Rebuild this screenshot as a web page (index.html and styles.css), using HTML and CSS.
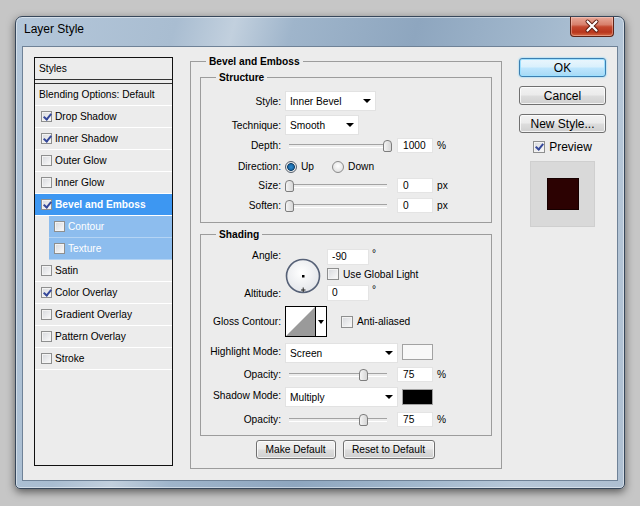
FILE: index.html
```html
<!DOCTYPE html>
<html lang="en">
<head>
  <meta charset="UTF-8">
  <title>Layer Style</title>
  <link rel="stylesheet" href="styles.css">
</head>
<body>
  <div class="window">
    <div class="titlebar">
      <span class="title">Layer Style</span>
      <div class="close">
        <svg width="44" height="20" viewBox="0 0 44 20">
          <path d="M17.5 5.5 L26.5 14.5 M26.5 5.5 L17.5 14.5" stroke="#5b1b10" stroke-width="4" stroke-linecap="round"/>
          <path d="M17.5 5.5 L26.5 14.5 M26.5 5.5 L17.5 14.5" stroke="#fff" stroke-width="2.2" stroke-linecap="round"/>
        </svg>
      </div>
    </div>

    <div class="client">
      <!-- styles list -->
      <div class="styles-list">
        <div class="list-head">Styles</div>
        <div class="list-blend">Blending Options: Default</div>
        <div class="item"><span class="cb on"></span>Drop Shadow</div>
        <div class="item"><span class="cb on"></span>Inner Shadow</div>
        <div class="item"><span class="cb"></span>Outer Glow</div>
        <div class="item"><span class="cb"></span>Inner Glow</div>
        <div class="item active"><span class="cb on"></span>Bevel and Emboss</div>
        <div class="item sub"><span class="cb"></span>Contour</div>
        <div class="item sub"><span class="cb"></span>Texture</div>
        <div class="item"><span class="cb"></span>Satin</div>
        <div class="item"><span class="cb on"></span>Color Overlay</div>
        <div class="item"><span class="cb"></span>Gradient Overlay</div>
        <div class="item"><span class="cb"></span>Pattern Overlay</div>
        <div class="item"><span class="cb"></span>Stroke</div>
      </div>

      <!-- settings -->
      <fieldset class="group outer">
        <legend>Bevel and Emboss</legend>

        <fieldset class="group structure">
          <legend>Structure</legend>
          <div class="row r-style">
            <span class="lbl">Style:</span>
            <div class="select w-style"><span>Inner Bevel</span><i class="arrow"></i></div>
          </div>
          <div class="row r-tech">
            <span class="lbl">Technique:</span>
            <div class="select w-tech"><span>Smooth</span><i class="arrow"></i></div>
          </div>
          <div class="row r-depth">
            <span class="lbl">Depth:</span>
            <div class="slider"><span class="thumb" style="left: 98px"></span></div>
            <div class="num">1000</div>
            <span class="unit">%</span>
          </div>
          <div class="row r-dir">
            <span class="lbl">Direction:</span>
            <span class="radio on"></span><span class="opt">Up</span>
            <span class="radio down"></span><span class="opt">Down</span>
          </div>
          <div class="row r-size">
            <span class="lbl">Size:</span>
            <div class="slider"><span class="thumb" style="left: 0px"></span></div>
            <div class="num">0</div>
            <span class="unit">px</span>
          </div>
          <div class="row r-soften">
            <span class="lbl">Soften:</span>
            <div class="slider"><span class="thumb" style="left: 0px"></span></div>
            <div class="num">0</div>
            <span class="unit">px</span>
          </div>
        </fieldset>

        <fieldset class="group shading">
          <legend>Shading</legend>
          <div class="angle-block">
            <div class="angle-labels">
              <span class="lbl">Angle:</span>
              <span class="lbl alt">Altitude:</span>
            </div>
            <svg class="dial" width="36" height="36" viewBox="0 0 36 36">
              <defs>
                <radialGradient id="dialFill" cx="45%" cy="40%" r="60%">
                  <stop offset="0" stop-color="#ffffff"/>
                  <stop offset="1" stop-color="#e4e6ea"/>
                </radialGradient>
              </defs>
              <circle cx="18" cy="18" r="16.5" fill="url(#dialFill)" stroke="#566177" stroke-width="1.6"/>
              <rect x="17" y="17" width="2.5" height="2.5" fill="#000"/>
              <path d="M18.2 29.5 V34 M16 32 H20.5" stroke="#222" stroke-width="1"/>
            </svg>
            <div class="angle-fields">
              <div class="frow">
                <div class="num w-angle">-90</div><span class="deg">°</span>
              </div>
              <div class="frow check-row">
                <span class="cb"></span><span>Use Global Light</span>
              </div>
              <div class="frow alt-row">
                <div class="num w-angle">0</div><span class="deg">°</span>
              </div>
            </div>
          </div>

          <div class="row r-gloss">
            <span class="lbl">Gloss Contour:</span>
            <div class="contour">
              <svg width="29" height="29" viewBox="0 0 29 29">
                <rect width="29" height="29" fill="#fff"/>
                <polygon points="0,29 29,0 29,29" fill="#9a9a9a"/>
              </svg>
              <div class="contour-drop"><i class="arrow"></i></div>
            </div>
            <span class="cb anti"></span><span>Anti-aliased</span>
          </div>

          <div class="row r-hmode">
            <span class="lbl">Highlight Mode:</span>
            <div class="select w-mode"><span>Screen</span><i class="arrow"></i></div>
            <div class="swatch light"></div>
          </div>
          <div class="row r-op1">
            <span class="lbl">Opacity:</span>
            <div class="slider"><span class="thumb" style="left: 74px"></span></div>
            <div class="num">75</div>
            <span class="unit">%</span>
          </div>
          <div class="row r-smode">
            <span class="lbl">Shadow Mode:</span>
            <div class="select w-mode"><span>Multiply</span><i class="arrow"></i></div>
            <div class="swatch dark"></div>
          </div>
          <div class="row r-op2">
            <span class="lbl">Opacity:</span>
            <div class="slider"><span class="thumb" style="left: 74px"></span></div>
            <div class="num">75</div>
            <span class="unit">%</span>
          </div>
        </fieldset>

        <div class="defaults">
          <div class="btn small w-make">Make Default</div>
          <div class="btn small w-reset">Reset to Default</div>
        </div>
      </fieldset>

      <!-- dialog buttons -->
      <div class="side">
        <div class="btn big default">OK</div>
        <div class="btn big">Cancel</div>
        <div class="btn big">New Style...</div>
        <div class="preview-row"><span class="cb on"></span><span>Preview</span></div>
        <div class="preview-box"><div class="preview-swatch"></div></div>
      </div>
    </div>
  </div>
</body>
</html>
```

FILE: styles.css
```css
* {
  margin: 0;
  padding: 0;
  box-sizing: border-box;
}

body {
  width: 640px;
  height: 506px;
  overflow: hidden;
  background: #c6c6c6;
  padding: 16px 15px 0;
  font-family: "Liberation Sans", Arial, sans-serif;
  font-size: 10.2px;
  color: #000;
}

/* window frame */
.window {
  width: 610px;
  height: 473px;
  border: 1px solid #37475a;
  border-radius: 7px 7px 5px 5px;
  background: linear-gradient(105deg, #b4c7da 0%, #a9bdd1 22%, #c2d0de 30%, #9fb5cb 38%, #8ea6bf 55%, #a2b8cd 72%, #b6c7d8 85%, #aebfd1 100%);
  box-shadow: 0 3px 9px rgba(0, 0, 0, 0.55), inset 0 0 0 1px rgba(255, 255, 255, 0.45);
  padding: 0 6px 7px;
  display: flex;
  flex-direction: column;
}

.titlebar {
  height: 29px;
  display: flex;
  justify-content: space-between;
  align-items: flex-start;
}

.title {
  font-size: 12px;
  line-height: 14px;
  padding: 5px 0 0 2px;
}

.close {
  width: 44px;
  height: 20px;
  margin-right: 4px;
  border: 1px solid #5e2418;
  border-top: none;
  border-radius: 0 0 4px 4px;
  background: linear-gradient(#e8a999 0%, #d8806c 40%, #c4482f 52%, #b8361d 80%, #d46a45 100%);
  box-shadow: inset 0 0 0 1px rgba(255, 220, 210, 0.4);
}

.close svg {
  display: block;
  margin: -1px 0 0 -1px;
}

.client {
  flex: 1;
  display: flex;
  align-items: flex-start;
  background: #ececec;
  border: 1px solid #6f8297;
  padding: 8px 0 0 11px;
}

/* left list */
.styles-list {
  width: 139px;
  height: 409px;
  margin-top: 2px;
  border: 1px solid #111;
}

.list-head {
  height: 22px;
  line-height: 21px;
  padding-left: 4px;
  border-bottom: 1px solid #333;
}

.list-blend {
  margin-top: 3px;
  height: 23px;
  line-height: 21px;
  padding-left: 4px;
  border-top: 1px solid #333;
  border-bottom: 1px solid #fff;
}

.item {
  height: 22px;
  display: flex;
  align-items: center;
  padding-left: 6px;
  border-bottom: 1px solid #fff;
}

.item.active {
  background: #3d97f2;
  color: #fff;
  font-weight: bold;
}

.item.sub {
  margin-left: 14px;
  padding-left: 5px;
  background: #8dbdee;
  color: #fff;
  border-bottom-color: #b4d4f4;
}

/* checkbox */
.cb {
  position: relative;
  flex: none;
  width: 11px;
  height: 11px;
  margin-right: 3px;
  border: 1px solid #8e8f8f;
  background: linear-gradient(135deg, #d6d8dc, #fbfbfb);
  box-shadow: inset 0 0 0 1px #f3f3f3;
}

.cb.on::after {
  content: '';
  position: absolute;
  left: 3px;
  top: 0;
  width: 3px;
  height: 6px;
  border-right: 2px solid #35489a;
  border-bottom: 2px solid #35489a;
  transform: rotate(40deg);
}

/* fieldsets */
.group {
  border: 1px solid #9c9c9c;
  min-width: 0;
}

.group > legend {
  font-weight: bold;
  line-height: 13px;
  padding: 0 3px;
  margin-left: 15px;
}

.outer {
  width: 312px;
  height: 414px;
  margin-left: 17px;
}

.structure {
  width: 292px;
  height: 152px;
  margin: 3px 0 0 9px;
}

.shading {
  width: 292px;
  height: 208px;
  margin: 5px 0 0 9px;
}

.row {
  display: flex;
  align-items: center;
}

.lbl {
  flex: none;
  width: 80px;
  margin-right: 4px;
  text-align: right;
}

.r-style { height: 20px; margin-top: 7px; }
.r-tech { height: 20px; margin-top: 4px; }
.r-depth { height: 17px; margin-top: 2px; }
.r-dir { height: 17px; margin-top: 4px; }
.r-size { height: 17px; margin-top: 2px; }
.r-soften { height: 17px; margin-top: 3px; }

/* select boxes */
.select {
  height: 20px;
  display: flex;
  align-items: center;
  justify-content: space-between;
  padding: 0 4px;
  background: #fff;
  border: 1px solid #e2e2e2;
}

.w-style { width: 91px; }
.w-tech { width: 74px; }
.w-mode { width: 113px; }

.arrow {
  width: 0;
  height: 0;
  border-left: 4px solid transparent;
  border-right: 4px solid transparent;
  border-top: 4px solid #000;
}

/* sliders */
.slider {
  position: relative;
  width: 107px;
  height: 17px;
}

.slider::before {
  content: '';
  position: absolute;
  left: 4px;
  right: 5px;
  top: 7px;
  height: 2px;
  border-top: 1px solid #a3a3a3;
  border-bottom: 1px solid #fff;
}

.thumb {
  position: absolute;
  top: 3px;
  width: 9px;
  height: 12px;
  border: 1px solid #7d7d7d;
  border-radius: 4px 4px 2px 2px;
  background: linear-gradient(90deg, #f4f4f4, #d6d6d6);
}

.num {
  width: 36px;
  height: 15px;
  margin-left: 5px;
  padding-left: 5px;
  line-height: 13px;
  background: #fff;
  border: 1px solid #e4e4e4;
}

.unit {
  margin-left: 4px;
}

/* radios */
.radio {
  width: 12px;
  height: 12px;
  border-radius: 50%;
  border: 1px solid #8a8a8a;
  background: radial-gradient(circle at 50% 40%, #fff, #d8d8d8);
}

.radio.on {
  border-color: #555f6c;
  background: radial-gradient(circle, #2a8ad0 0, #1a6aa8 2.5px, #0d3f6a 3.5px, #e6e6e6 4.3px, #fafafa 100%);
}

.radio.down {
  margin-left: 18px;
}

.opt {
  margin-left: 4px;
}

/* angle block */
.angle-block {
  display: flex;
  margin-top: 8px;
}

.angle-labels {
  display: flex;
  flex-direction: column;
}

.angle-labels .lbl {
  line-height: 13px;
}

.angle-labels .alt {
  margin-top: 25px;
}

.dial {
  display: block;
  margin-top: 9px;
}

.angle-fields {
  margin-left: 6px;
}

.frow {
  display: flex;
  align-items: flex-start;
}

.frow .num {
  margin-left: 0;
}

.w-angle {
  width: 42px;
  height: 16px;
  line-height: 14px;
  padding-left: 4px;
}

.deg {
  margin-left: 3px;
  line-height: 10px;
}

.check-row {
  margin-top: 3px;
  align-items: center;
}

.check-row .cb {
  margin-right: 4px;
  width: 12px;
  height: 12px;
}

.alt-row {
  margin-top: 5px;
}

/* gloss contour */
.r-gloss {
  margin-top: 5px;
  height: 31px;
}

.contour {
  display: flex;
  width: 42px;
  height: 31px;
  border: 1px solid #000;
  background: #fff;
}

.contour svg {
  display: block;
}

.contour-drop {
  flex: 1;
  display: flex;
  align-items: center;
  justify-content: center;
  border-left: 1px solid #000;
}

.contour-drop .arrow {
  border-left-width: 3px;
  border-right-width: 3px;
}

.cb.anti {
  margin: 0 4px 0 14px;
  width: 12px;
  height: 12px;
}

/* modes */
.r-hmode { height: 20px; margin-top: 6px; align-items: flex-start; }
.r-op1 { height: 17px; margin-top: 3px; }
.r-smode { height: 20px; margin-top: 4px; align-items: flex-start; }
.r-op2 { height: 17px; margin-top: 4px; }

.r-hmode .lbl,
.r-smode .lbl {
  line-height: 18px;
}

.swatch {
  width: 31px;
  height: 16px;
  margin-left: 4px;
  border: 1px solid #a2a2a2;
}

.swatch.light { background: #f8f8f8; margin-top: 1px; }
.swatch.dark { background: #000; margin-top: 2px; }

/* buttons */
.btn {
  display: flex;
  align-items: center;
  justify-content: center;
  height: 19px;
  border: 1px solid #707070;
  border-radius: 3px;
  background: linear-gradient(#f2f2f2 0%, #ebebeb 48%, #dddddd 52%, #cfcfcf 100%);
  box-shadow: inset 0 0 0 1px rgba(255, 255, 255, 0.75);
}

.defaults {
  display: flex;
  justify-content: center;
  gap: 7px;
  margin: 4px 2px 0 0;
}

.w-make { width: 80px; }
.w-reset { width: 92px; }

.side {
  width: 87px;
  margin: 3px 0 0 17px;
  display: flex;
  flex-direction: column;
  align-items: center;
  font-size: 12px;
}

.btn.big {
  width: 87px;
  margin-bottom: 9px;
}

.btn.default {
  border-color: #3c7fb1;
  background: linear-gradient(#eaf6fd 0%, #d9f0fc 48%, #bee6fd 52%, #a7d9f5 100%);
  box-shadow: inset 0 0 0 1px #9de0ff, 0 0 2px #5ecbff;
}

.preview-row {
  display: flex;
  align-items: center;
  height: 14px;
  margin-top: -2px;
}

.preview-row .cb {
  width: 12px;
  height: 12px;
  margin-right: 4px;
}

.preview-box {
  width: 65px;
  height: 66px;
  margin-top: 7px;
  background: #d9d9d9;
  border: 1px solid #cfcfcf;
  display: flex;
  align-items: center;
  justify-content: center;
}

.preview-swatch {
  width: 32px;
  height: 32px;
  background: #2c0202;
  border: 1px solid #160000;
}
```
